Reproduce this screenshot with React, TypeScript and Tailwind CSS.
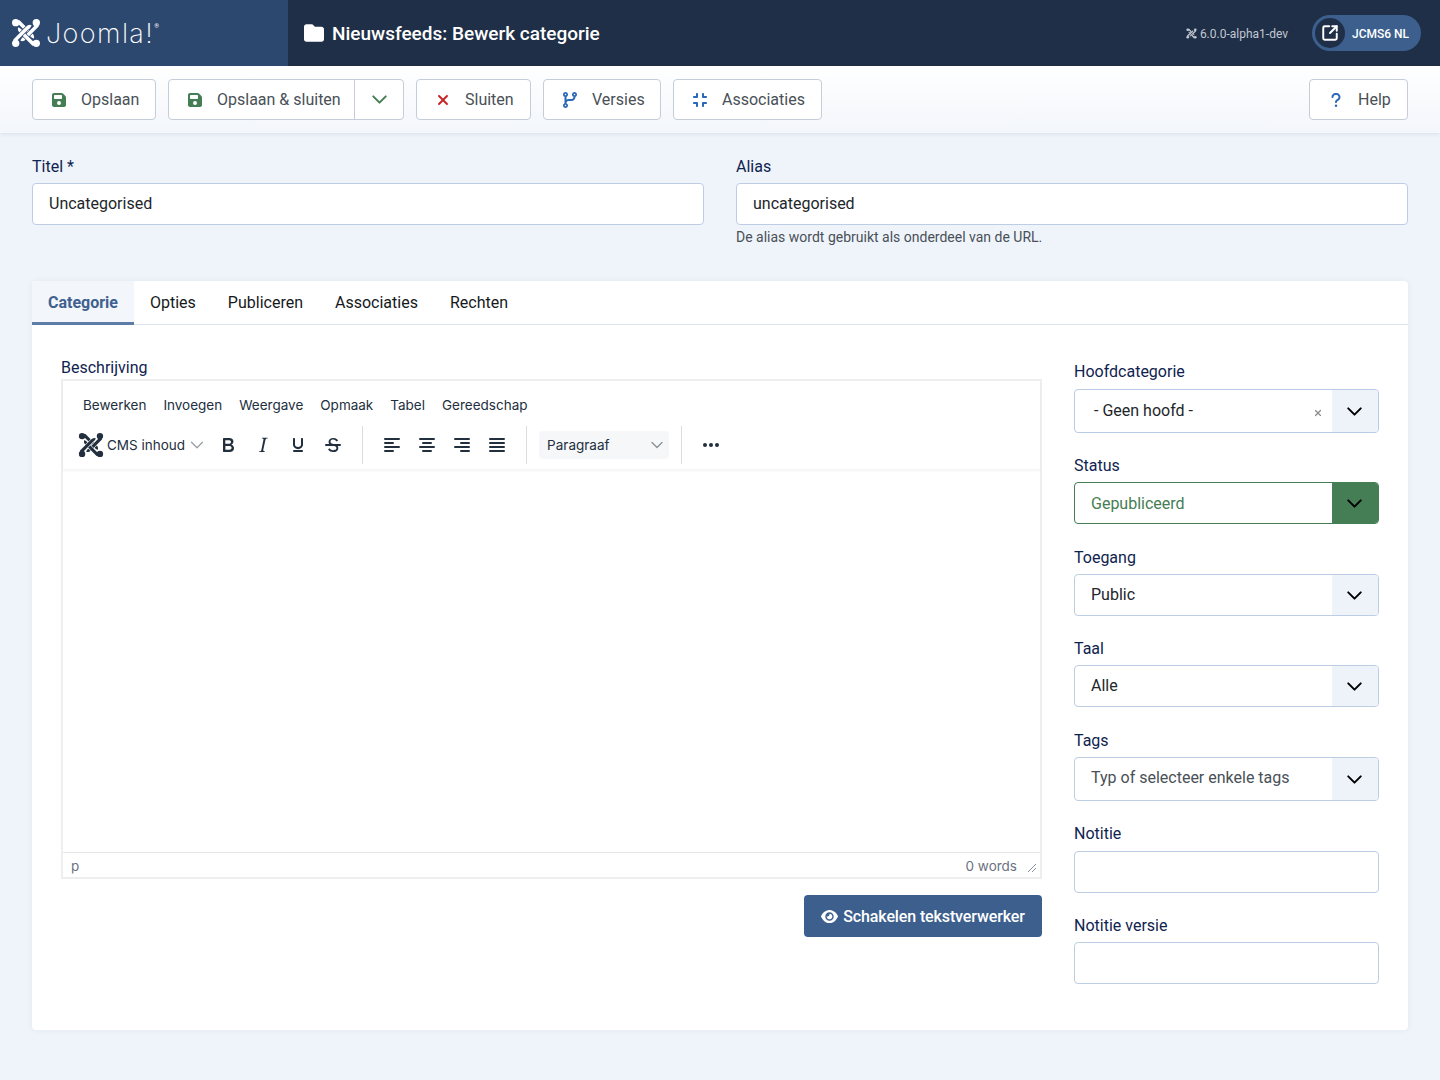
import React from 'react'
import {ChevronDown, SquareArrowOutUpRight} from 'lucide-react'
import {
  FaCodeBranch,
  FaCompress,
  FaEye,
  FaFloppyDisk,
  FaFolder,
  FaQuestion,
  FaXmark,
} from 'react-icons/fa6'

const armPath = 'M5 5 L8.5 4.5 L21 17 Q23.5 19.5 22.5 21'

function JoomlaMark({size, gap, className}: {size: number; gap: string; className?: string}) {
  return (
    <svg width={size} height={size} viewBox="0 0 32 32" className={className} fill="none" stroke="currentColor">
      {[0, 90, 180, 270].map(r => (
        <g key={r} transform={`rotate(${r} 16 16)`}>
          <path d={armPath} stroke={gap} strokeWidth="5.2" />
          <path d={armPath} strokeWidth="3.8" />
        </g>
      ))}
      <g fill="currentColor" stroke="none">
        <circle cx="5" cy="5" r="3.9" />
        <circle cx="27" cy="5" r="3.9" />
        <circle cx="5" cy="27" r="3.9" />
        <circle cx="27" cy="27" r="3.9" />
      </g>
    </svg>
  )
}

function ToolButton({
  icon,
  label,
  className,
}: {
  icon: React.ReactNode
  label: string
  className: string
}) {
  return (
    <button
      type="button"
      className={`flex h-[41px] items-center rounded border border-[#c5cdd9] bg-white pl-[18px] text-base text-[#495057] ${className}`}
    >
      <span className="flex w-[16px] shrink-0 items-center justify-center">{icon}</span>
      <span className="ml-[14px]">{label}</span>
    </button>
  )
}

function Field({
  label,
  className = '',
  labelClass = 'mb-[4px]',
  children,
}: {
  label: string
  className?: string
  labelClass?: string
  children: React.ReactNode
}) {
  return (
    <div className={className}>
      <label className={`block text-base leading-6 text-[#0f2350] ${labelClass}`}>{label}</label>
      {children}
    </div>
  )
}

function Arrow() {
  return <ChevronDown size={25} strokeWidth={1.9} className="text-black" />
}

function SelectBox({value}: {value: string}) {
  return (
    <div className="flex h-[42px] overflow-hidden rounded border border-[#bdcde3] bg-white">
      <div className="flex flex-1 items-center px-4 text-base text-[#22262a]">{value}</div>
      <div className="flex w-[46px] items-center justify-center bg-[#eef3fa] pr-[2px]">
        <Arrow />
      </div>
    </div>
  )
}

function EdIcon({d}: {d: string}) {
  return (
    <svg width="24" height="24" viewBox="0 0 24 24" className="shrink-0 fill-[#222f3e]">
      <path d={d} />
    </svg>
  )
}

const alignLeft = 'M5 5h14a1 1 0 0 1 0 2H5a1 1 0 0 1 0-2zm0 4h8a1 1 0 0 1 0 2H5a1 1 0 0 1 0-2zm0 8h8a1 1 0 0 1 0 2H5a1 1 0 0 1 0-2zm0-4h14a1 1 0 0 1 0 2H5a1 1 0 0 1 0-2z'
const alignCenter = 'M5 5h14a1 1 0 0 1 0 2H5a1 1 0 0 1 0-2zm3 4h8a1 1 0 0 1 0 2H8a1 1 0 0 1 0-2zm0 8h8a1 1 0 0 1 0 2H8a1 1 0 0 1 0-2zm-3-4h14a1 1 0 0 1 0 2H5a1 1 0 0 1 0-2z'
const alignRight = 'M5 5h14a1 1 0 0 1 0 2H5a1 1 0 0 1 0-2zm6 4h8a1 1 0 0 1 0 2h-8a1 1 0 0 1 0-2zm0 8h8a1 1 0 0 1 0 2h-8a1 1 0 0 1 0-2zm-6-4h14a1 1 0 0 1 0 2H5a1 1 0 0 1 0-2z'
const alignJustify = 'M5 5h14a1 1 0 0 1 0 2H5a1 1 0 0 1 0-2zm0 4h14a1 1 0 0 1 0 2H5a1 1 0 0 1 0-2zm0 4h14a1 1 0 0 1 0 2H5a1 1 0 0 1 0-2zm0 4h14a1 1 0 0 1 0 2H5a1 1 0 0 1 0-2z'
const bold = 'M7.8 19c-.3 0-.5 0-.6-.2l-.2-.5V5.7c0-.2 0-.4.2-.5l.6-.2h5c1.5 0 2.7.3 3.5 1 .7.6 1.1 1.4 1.1 2.5a3 3 0 0 1-.6 1.9c-.4.6-1 1-1.6 1.2.4.1.9.3 1.3.6s.8.7 1 1.2c.4.4.5 1 .5 1.6 0 1.3-.4 2.3-1.3 3-.8.7-2.1 1-3.8 1H7.8zm5-8.3c.6 0 1.2-.1 1.6-.5.4-.3.6-.7.6-1.3 0-1.1-.8-1.7-2.4-1.7H9.3v3.5h3.5zm.5 6c.7 0 1.3-.1 1.7-.4.4-.4.6-.9.6-1.5s-.2-1-.7-1.4c-.4-.3-1-.4-2-.4H9.4v3.8h4z'
const italic = 'M16.7 4.7l-.1.9h-.3c-.6 0-1 0-1.4.3-.3.3-.4.6-.5 1.1l-2.1 9.8v.6c0 .5.4.8 1.4.8h.2l-.2.8H8l.2-.8h.2c1.1 0 1.8-.5 2-1.5l2-9.8.1-.5c0-.6-.4-.8-1.4-.8h-.3l.2-.9h5.8z'
const underline = 'M16 5c.6 0 1 .4 1 1v5.5a4 4 0 0 1-.4 1.8l-1 1.4a5.3 5.3 0 0 1-5.5 1 5 5 0 0 1-1.6-1c-.5-.4-.8-.9-1.1-1.4a4 4 0 0 1-.4-1.8V6c0-.6.4-1 1-1s1 .4 1 1v5.5c0 .3 0 .6.2 1l.6.7a3.3 3.3 0 0 0 2.2.8 3.4 3.4 0 0 0 2.2-.8c.3-.2.4-.5.6-.8l.2-.9V6c0-.6.4-1 1-1zM8 17h8c.6 0 1 .4 1 1s-.4 1-1 1H8a1 1 0 0 1 0-2z'
const strike = 'M15.6 8.5c-.5-.7-1-1.1-1.3-1.3-.6-.4-1.3-.6-2-.6-2.7 0-2.8 1.7-2.8 2.1 0 1.6 1.8 2 3.2 2.3 4.4.9 4.6 2.8 4.6 3.9 0 1.4-.7 4.1-5 4.1A6.2 6.2 0 0 1 7 16.4l1.5-1.1c.4.6 1.6 2 3.7 2 1.6 0 2.5-.4 3-1.2.4-.8.3-2-.8-2.6-.7-.4-1.6-.7-2.9-1-1-.2-3.9-.8-3.9-3.6C7.6 6 10.3 5 12.4 5c2.9 0 4.2 1.6 4.7 2.4l-1.5 1.1zM5 11h14a1 1 0 0 1 0 2H5a1 1 0 0 1 0-2z'

const tabs = ['Opties', 'Publiceren', 'Associaties', 'Rechten']
const menus = ['Bewerken', 'Invoegen', 'Weergave', 'Opmaak', 'Tabel', 'Gereedschap']

export default function App() {
  return (
    <div className="min-h-[1080px] bg-[#eff4fb] font-['Roboto',sans-serif]">
      <header className="flex h-[66px] items-center bg-[#1f2f47] text-white">
        <div className="flex h-full w-[288px] items-center bg-[#2d486f] pl-[11px]">
          <JoomlaMark size={30} gap="#2d486f" />
          <span className="ml-[5px] font-['Inter',sans-serif] text-[27px] font-extralight leading-none tracking-[1.4px]">Joomla!</span>
          <span className="mb-[14px] text-[6px] leading-none">®</span>
        </div>
        <FaFolder size={20} className="ml-[16px]" />
        <h1 className="ml-[8px] mt-[2px] text-[19px] font-medium">Nieuwsfeeds: Bewerk categorie</h1>
        <div className="ml-auto flex items-center text-xs text-[#c2c8d1]">
          <JoomlaMark size={11} gap="#1f2f47" />
          <span className="ml-[3px] mt-px">6.0.0-alpha1-dev</span>
        </div>
        <div className="ml-[24px] mr-[19px] flex h-[36px] w-[109px] items-center rounded-full bg-[#3d5f8d] pl-[3px]">
          <span className="flex h-[30px] w-[30px] items-center justify-center rounded-full bg-[#1f2f47]">
            <SquareArrowOutUpRight size={18} strokeWidth={2.6} />
          </span>
          <span className="ml-[7px] mt-px text-xs font-medium">JCMS6 NL</span>
        </div>
      </header>

      <div className="flex h-[67px] items-center bg-gradient-to-b from-white to-[#f3f6fb] px-8 shadow-[0_1px_4px_rgba(20,50,100,0.1)]">
        <ToolButton
          icon={<FaFloppyDisk size={16} className="text-[#457d54]" />}
          label="Opslaan"
          className="w-[124px]"
        />
        <div className="ml-[12px] flex h-[41px] w-[236px] rounded border border-[#c5cdd9] bg-white text-base text-[#495057]">
          <div className="flex w-[186px] items-center border-r border-[#c5cdd9] pl-[18px]">
            <FaFloppyDisk size={16} className="text-[#457d54]" />
            <span className="ml-[14px]">Opslaan &amp; sluiten</span>
          </div>
          <div className="flex flex-1 items-center justify-center">
            <ChevronDown size={25} strokeWidth={1.9} className="text-[#457d54]" />
          </div>
        </div>
        <ToolButton icon={<FaXmark size={16} className="text-[#c52827]" />} label="Sluiten" className="ml-[12px] w-[115px]" />
        <ToolButton icon={<FaCodeBranch size={16} className="text-[#2a69b8]" />} label="Versies" className="ml-[12px] w-[118px]" />
        <ToolButton icon={<FaCompress size={16} className="text-[#2a69b8]" />} label="Associaties" className="ml-[12px] w-[149px]" />
        <ToolButton icon={<FaQuestion size={16} className="text-[#2a69b8]" />} label="Help" className="ml-auto w-[99px]" />
      </div>

      <main className="px-8 pt-[22px]">
        <div className="grid grid-cols-2 gap-8">
          <div>
            <label className="mb-[4px] block text-base leading-6 text-[#0f2350]">Titel *</label>
            <input
              readOnly
              value="Uncategorised"
              className="h-[42px] w-full rounded border border-[#bdcde3] bg-white px-4 pb-[2px] text-base text-[#22262a] outline-none"
            />
          </div>
          <div>
            <label className="mb-[4px] block text-base leading-6 text-[#0f2350]">Alias</label>
            <input
              readOnly
              value="uncategorised"
              className="h-[42px] w-full rounded border border-[#bdcde3] bg-white px-4 pb-[2px] text-base text-[#22262a] outline-none"
            />
            <div className="mt-[2px] text-sm leading-[21px] text-[#495057]">De alias wordt gebruikt als onderdeel van de URL.</div>
          </div>
        </div>

        <section className="mt-[33px] h-[749px] rounded-sm bg-white shadow-[0_0_6px_rgba(20,50,100,0.06)]">
          <div className="flex h-[44px] border-b border-[#dfe5f0]">
            <div className="-mb-px flex h-[44px] items-center border-b-[3px] border-[#5d7ca6] bg-[#f3f6fa] px-4 pt-[3px] text-base font-bold text-[#3f618f]">
              Categorie
            </div>
            {tabs.map(t => (
              <div key={t} className="flex items-center px-4 text-base text-[#16191c]">
                {t}
              </div>
            ))}
          </div>

          <div className="flex pl-[29px] pr-[29px] pt-[30px]">
            <div className="w-[981px] shrink-0">
              <label className="block h-[24px] pt-px text-base leading-6 text-[#0f2350]">Beschrijving</label>
              <div className="flex h-[500px] flex-col border-2 border-[#eeeeee] font-['Inter',sans-serif] text-[#222f3e]">
                <div className="shadow-[0_2px_2px_rgba(34,47,62,0.05)]">
                  <div className="flex h-[40px] items-center gap-[17px] pl-[20px] pt-[8px] text-[13.5px]">
                    {menus.map(m => (
                      <span key={m}>{m}</span>
                    ))}
                  </div>
                  <div className="flex h-[48px] items-center pl-[15px] text-[13.5px]">
                    <JoomlaMark size={26} gap="#ffffff" className="text-[#222f3e]" />
                    <span className="ml-[3px]">CMS inhoud</span>
                    <ChevronDown size={22} strokeWidth={1.4} className="ml-px text-[#9aa0a8]" />
                    <div className="ml-[8px] flex h-[38px] items-center gap-[11px] border-r border-[#dcdcdc] pr-[17px]">
                      <EdIcon d={bold} />
                      <EdIcon d={italic} />
                      <EdIcon d={underline} />
                      <EdIcon d={strike} />
                    </div>
                    <div className="flex h-[38px] items-center gap-[11px] border-r border-[#dcdcdc] pl-[17px] pr-[17px]">
                      <EdIcon d={alignLeft} />
                      <EdIcon d={alignCenter} />
                      <EdIcon d={alignRight} />
                      <EdIcon d={alignJustify} />
                    </div>
                    <div className="ml-[12px] flex h-[28px] w-[130px] items-center rounded bg-[#f6f7f8] pl-[8px] pr-[2px]">
                      Paragraaf
                      <ChevronDown size={20} strokeWidth={1.5} className="ml-auto text-[#8a9099]" />
                    </div>
                    <div className="ml-[12px] flex h-[38px] items-center border-l border-[#dcdcdc] pl-[21px]">
                      <span className="flex gap-[2px]">
                        <i className="h-[4px] w-[4px] rounded-full bg-[#222f3e]" />
                        <i className="h-[4px] w-[4px] rounded-full bg-[#222f3e]" />
                        <i className="h-[4px] w-[4px] rounded-full bg-[#222f3e]" />
                      </span>
                    </div>
                  </div>
                </div>
                <div className="flex-1" />
                <div className="flex h-[25px] items-center justify-between border-t border-[#e6e6e6] pl-[8px] pr-[3px] pt-[2px] text-[13.5px] text-[#6b7280]">
                  <span>p</span>
                  <span className="flex items-center">
                    0 words
                    <svg width="10" height="10" viewBox="0 0 10 10" className="ml-[10px] mt-[4px] stroke-[#8a9099]">
                      <path d="M1 9L9 1M5 9L9 5" fill="none" />
                    </svg>
                  </span>
                </div>
              </div>
              <div className="mt-[16px] flex justify-end">
                <button
                  type="button"
                  className="flex h-[42px] w-[238px] items-center justify-center rounded bg-[#3d5f8d] pt-px text-base font-medium tracking-[-0.12px] text-white"
                >
                  <FaEye size={17} className="mr-[5px]" />
                  Schakelen tekstverwerker
                </button>
              </div>
            </div>

            <aside className="ml-[32px] w-[305px] shrink-0 pt-[5px]">
              <Field label="Hoofdcategorie" labelClass="mb-[5px]">
                <div className="flex h-[44px] overflow-hidden rounded border border-[#b9cbe6] bg-white">
                  <div className="flex flex-1 items-center pl-[19px] text-base text-[#22262a]">- Geen hoofd -</div>
                  <div className="flex items-center pr-[9px] pt-[3px]">
                    <FaXmark size={10} className="text-[#8c8c8c]" />
                  </div>
                  <div className="flex w-[46px] items-center justify-center bg-[#eef3fa] pr-[2px]">
                    <Arrow />
                  </div>
                </div>
              </Field>
              <Field label="Status" className="mt-[21px]">
                <div className="flex h-[42px] overflow-hidden rounded border border-[#457d54] bg-white">
                  <div className="flex flex-1 items-center px-4 pt-px text-base text-[#457d54]">Gepubliceerd</div>
                  <div className="flex w-[46px] items-center justify-center bg-[#457d54] pr-[2px]">
                    <Arrow />
                  </div>
                </div>
              </Field>
              <Field label="Toegang" className="mt-[22px]">
                <SelectBox value="Public" />
              </Field>
              <Field label="Taal" className="mt-[21px]">
                <SelectBox value="Alle" />
              </Field>
              <Field label="Tags" className="mt-[22px]">
                <div className="flex h-[44px] overflow-hidden rounded border border-[#bdcde3] bg-white">
                  <div className="flex flex-1 items-center px-4 pb-[2px] text-base text-[#495057]">Typ of selecteer enkele tags</div>
                  <div className="flex w-[46px] items-center justify-center bg-[#eef3fa] pr-[2px]">
                    <Arrow />
                  </div>
                </div>
              </Field>
              <Field label="Notitie" className="mt-[21px]" labelClass="mb-[5px]">
                <div className="h-[42px] rounded border border-[#bdcde3] bg-white" />
              </Field>
              <Field label="Notitie versie" className="mt-[21px]">
                <div className="h-[42px] rounded border border-[#bdcde3] bg-white" />
              </Field>
            </aside>
          </div>
        </section>
      </main>
    </div>
  )
}
